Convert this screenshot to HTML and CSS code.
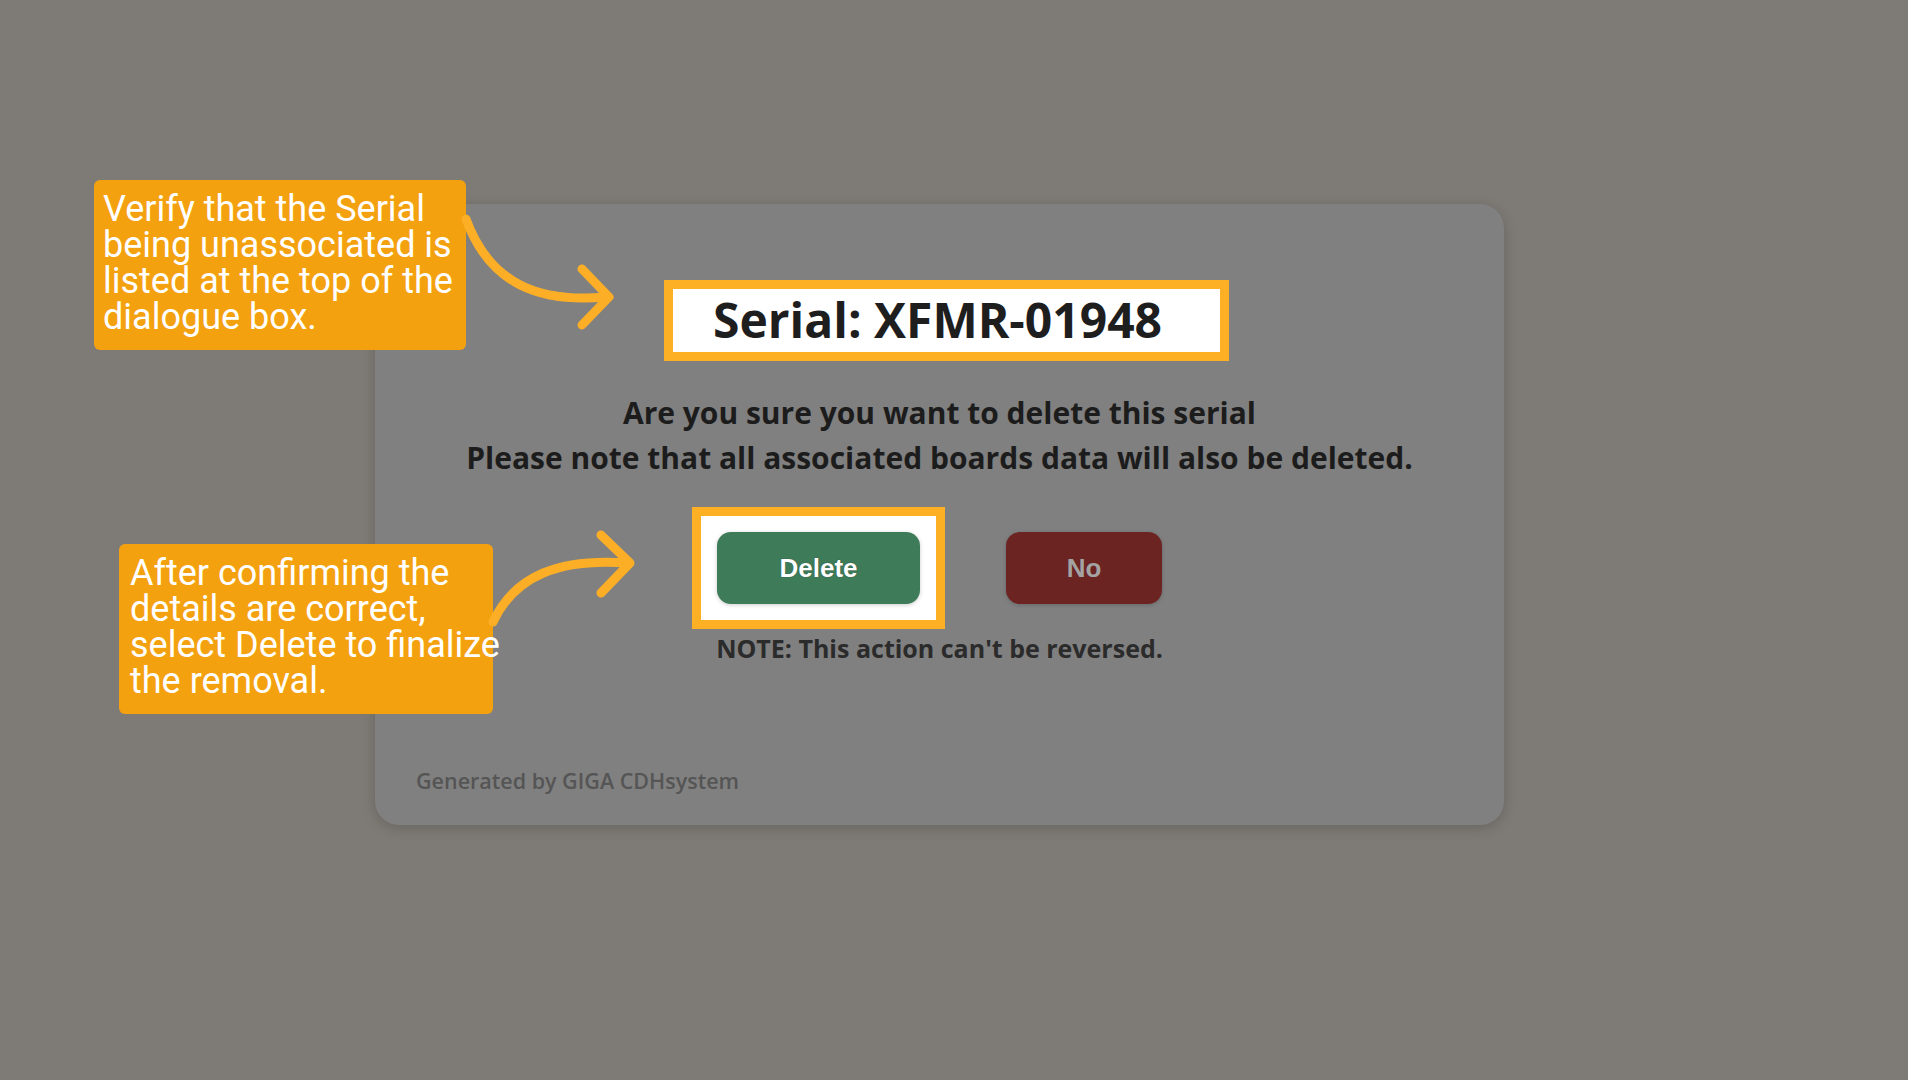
FILE: index.html
```html
<!DOCTYPE html>
<html lang="en">
<head>
    <meta charset="UTF-8">
    <meta name="viewport" content="width=device-width, initial-scale=1.0">
    <title>Delete Serial</title>
    <link rel="stylesheet" href="styles.css">
</head>
<body>
    <div class="dialog">
        <div class="serial-box">Serial: XFMR-01948</div>

        <div class="question">
            <p>Are you sure you want to delete this serial</p>
            <p>Please note that all associated boards data will also be deleted.</p>
        </div>

        <div class="actions">
            <div class="focus-ring">
                <button class="btn btn-delete">Delete</button>
            </div>
            <button class="btn btn-no">No</button>
        </div>

        <p class="note">NOTE: This action can't be reversed.</p>

        <p class="footer">Generated by GIGA CDHsystem</p>
    </div>

    <!-- annotation callouts -->
    <div class="callout callout-serial">Verify that the Serial<br>being unassociated is<br>listed at the top of the<br>dialogue box.</div>
    <div class="callout callout-delete">After confirming the<br>details are correct,<br>select Delete to finalize<br>the removal.</div>

    <svg class="arrows" width="1908" height="1080" viewBox="0 0 1908 1080">
        <path d="M466 219 C 490 285, 540 303, 606 297"/>
        <path d="M582 269 L609 297 L582 325"/>
        <path d="M493 622 C 515 575, 560 558, 628 563"/>
        <path d="M601 535 L630 563 L601 593"/>
    </svg>
</body>
</html>
```

FILE: styles.css
```css
body {
    margin: 0;
    width: 1908px;
    height: 1080px;
    overflow: hidden;
    background-color: #7e7b76;
    font-family: "Open Sans", "Liberation Sans", sans-serif;
    position: relative;
}
.dialog {
    box-sizing: border-box;
    width: 1129px;
    height: 621px;
    margin: 204px 0 0 375px;
    padding-top: 76px;
    background: #808080;
    border-radius: 24px;
    box-shadow: 0 3px 14px rgba(0,0,0,0.18);
    display: flex;
    flex-direction: column;
}
.serial-box {
    box-sizing: border-box;
    width: 565px;
    height: 81px;
    margin-left: 289px;
    padding-left: 40px;
    border: 9px solid #fdb023;
    background: #fff;
    color: #1e1e1e;
    font-size: 48px;
    font-weight: 700;
    line-height: 62px;
    white-space: nowrap;
}
.question {
    margin-top: 29px;
    text-align: center;
    color: #1c1c1c;
    font-size: 30px;
    font-weight: 700;
    line-height: 45px;
}
.question p {
    margin: 0;
}
.actions {
    display: flex;
    align-items: flex-start;
    margin-top: 27px;
    margin-left: 317px;
}
.focus-ring {
    border: 9px solid #fdb023;
    background: #fff;
    padding: 16px;
}
.btn {
    height: 72px;
    border: none;
    border-radius: 14px;
    font-family: "Liberation Sans", Arial, sans-serif;
    font-size: 26px;
    font-weight: 700;
    box-shadow: 0 1px 4px rgba(0,0,0,0.2);
}
.btn-delete {
    display: block;
    width: 203px;
    background: #3e7b59;
    color: #fff;
    text-shadow: 0 0 1px rgba(0,0,0,0.5);
}
.btn-no {
    width: 156px;
    margin: 25px 0 0 61px;
    background: #6c2423;
    color: #a3a3a3;
}
.note {
    margin: 4px 0 0;
    text-align: center;
    color: #2b2b2b;
    font-size: 25px;
    font-weight: 700;
    line-height: 30px;
}
.footer {
    margin: 104px 0 0 41px;
    color: #555;
    font-size: 21.5px;
    font-weight: 600;
    line-height: 28px;
}
.callout {
    position: absolute;
    box-sizing: border-box;
    padding: 11px 9px 0;
    background: #f4a10f;
    border-radius: 6px;
    color: #fff;
    font-family: Roboto, "Liberation Sans", sans-serif;
    font-size: 36px;
    line-height: 36px;
    white-space: nowrap;
}
.callout-serial {
    left: 94px;
    top: 180px;
    width: 372px;
    height: 170px;
}
.callout-delete {
    left: 119px;
    top: 544px;
    width: 374px;
    height: 170px;
    padding-left: 11px;
}
.arrows {
    position: absolute;
    left: 0;
    top: 0;
    pointer-events: none;
}
.arrows path {
    fill: none;
    stroke: #fbae26;
    stroke-width: 9;
    stroke-linecap: round;
    stroke-linejoin: round;
}
```
